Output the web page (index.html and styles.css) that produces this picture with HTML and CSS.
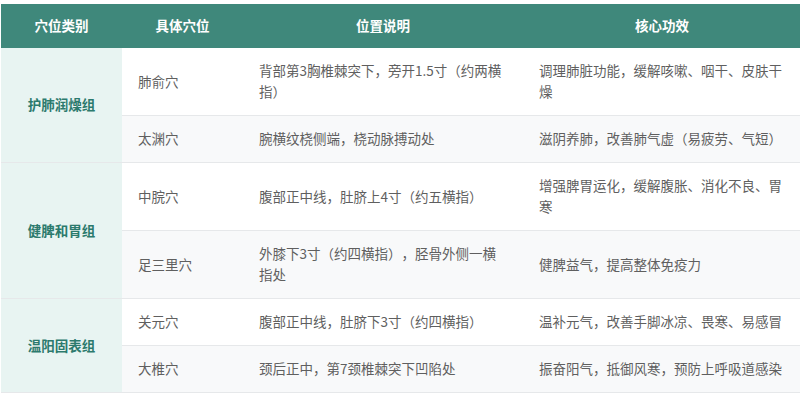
FILE: index.html
```html
<!DOCTYPE html>
<html lang="zh">
<head>
<meta charset="utf-8">
<title>穴位表</title>
<link rel="stylesheet" href="styles.css">
</head>
<body>
<div class="wrap">
<table class="acu">
  <colgroup>
    <col class="c1"><col class="c2"><col class="c3"><col class="c4">
  </colgroup>
  <thead>
    <tr><th>穴位类别</th><th>具体穴位</th><th>位置说明</th><th>核心功效</th></tr>
  </thead>
  <tbody>
    <tr>
      <td class="cat" rowspan="2">护肺润燥组</td>
      <td class="pt">肺俞穴</td>
      <td class="loc">背部第3胸椎棘突下，旁开1.5寸（约两横指）</td>
      <td class="eff">调理肺脏功能，缓解咳嗽、咽干、皮肤干燥</td>
    </tr>
    <tr class="alt">
      <td class="pt">太渊穴</td>
      <td class="loc">腕横纹桡侧端，桡动脉搏动处</td>
      <td class="eff">滋阴养肺，改善肺气虚（易疲劳、气短）</td>
    </tr>
    <tr>
      <td class="cat" rowspan="2">健脾和胃组</td>
      <td class="pt">中脘穴</td>
      <td class="loc">腹部正中线，肚脐上4寸（约五横指）</td>
      <td class="eff">增强脾胃运化，缓解腹胀、消化不良、胃寒</td>
    </tr>
    <tr class="alt">
      <td class="pt">足三里穴</td>
      <td class="loc">外膝下3寸（约四横指），胫骨外侧一横指处</td>
      <td class="eff">健脾益气，提高整体免疫力</td>
    </tr>
    <tr>
      <td class="cat" rowspan="2">温阳固表组</td>
      <td class="pt">关元穴</td>
      <td class="loc">腹部正中线，肚脐下3寸（约四横指）</td>
      <td class="eff">温补元气，改善手脚冰凉、畏寒、易感冒</td>
    </tr>
    <tr class="alt">
      <td class="pt">大椎穴</td>
      <td class="loc">颈后正中，第7颈椎棘突下凹陷处</td>
      <td class="eff">振奋阳气，抵御风寒，预防上呼吸道感染</td>
    </tr>
  </tbody>
</table>
</div>
</body>
</html>
```
FILE: styles.css
```css
html, body {
  margin: 0;
  padding: 0;
  background: #ffffff;
  overflow: hidden;
}
body {
  font-family: "Noto Sans CJK SC", "Noto Sans", sans-serif;
  font-size: 13.5px;
  color: #5f5f5f;
  text-spacing-trim: space-all;
}
.wrap {
  padding: 4px 0 0 1px;
}
.acu {
  width: 800px;
  border-collapse: collapse;
  table-layout: fixed;
}
.c1 { width: 121px; }
.c2 { width: 121px; }
.c3 { width: 280px; }
.c4 { width: 278px; }
.acu th {
  background: #3f887b;
  color: #ffffff;
  font-weight: 700;
  font-size: 13.5px;
  line-height: 21px;
  padding: 11px 10px 12px;
  text-align: center;
}
.acu td {
  line-height: 21px;
  padding: 12px 10px 13px 16px;
  border-bottom: 1px solid #e6e8ea;
  vertical-align: middle;
  text-align: left;
}
.acu tr.alt td {
  background: #f8f9fa;
}
.acu td.cat {
  background: #e8f4f2;
  color: #2c7a6d;
  font-weight: 700;
  text-align: center;
  padding: 12px 4px 13px;
}
.acu td.loc {
  padding-right: 18px;
}
.acu td.eff {
  padding-right: 12px;
}
```
